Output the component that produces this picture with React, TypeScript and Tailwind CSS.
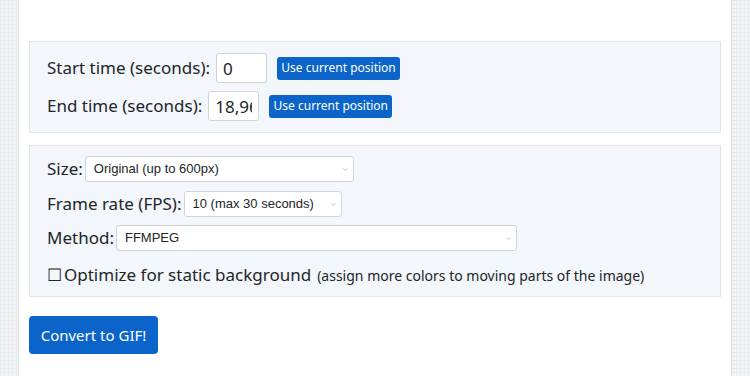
import { ChevronDown } from 'lucide-react'

const font = { fontFamily: '"Noto Sans", "Open Sans", sans-serif' }

export default function App() {
  return (
    <div className="flex min-h-[376px] w-[750px] bg-[#f3f4f5] bg-[linear-gradient(#e9ebed_1px,transparent_1px),linear-gradient(90deg,#e9ebed_1px,transparent_1px)] bg-[size:4px_4px] px-[18px] font-['Noto_Sans','Open_Sans',sans-serif] text-[#212529]">
      <div className="w-[714px] shrink-0 border-x border-[#e0e3e6] bg-white px-[10px] pt-[41px]">
        <section className="border border-[#e1e6eb] bg-[#f3f6fa] px-[17px] py-[11px]">
          <TimeRow label="Start time (seconds):" value="0" gap="ml-[6px]" />
          <div className="h-[8px]" />
          <TimeRow label="End time (seconds):" value="18,967" gap="ml-[6px]" />
        </section>

        <section className="mt-[12px] border border-[#e1e6eb] bg-[#f3f6fa] px-[17px] pb-[8px] pt-[10px]">
          <SelectRow label="Size:" value="Original (up to 600px)" width="w-[269px]" />
          <div className="h-[9px]" />
          <SelectRow label="Frame rate (FPS):" value="10 (max 30 seconds)" width="w-[158px]" />
          <div className="h-[8px]" />
          <SelectRow label="Method:" value="FFMPEG" width="w-[401px]" />
          <div className="mt-[11px] flex items-baseline">
            <span className="text-[17px] leading-[26px]">☐</span>
            <span className="ml-[2px] text-[17px] leading-[26px]">Optimize for static background</span>
            <span className="ml-[6px] text-[14px]">(assign more colors to moving parts of the image)</span>
          </div>
        </section>

        <button className="mt-[19px] h-[38px] w-[129px] rounded-[4px] bg-[#0b64c9] text-[15px] text-white" style={font}>
          Convert to GIF!
        </button>
      </div>
    </div>
  )
}

function TimeRow({ label, value, gap }: { label: string; value: string; gap: string }) {
  return (
    <div className="flex h-[30px] items-center">
      <span className="text-[17px]">{label}</span>
      <input
        readOnly
        value={value}
        className={`${gap} h-[30px] w-[51px] rounded-[3px] border border-[#ced4da] bg-white px-[6px] text-[17px] text-[#212529] outline-none`}
        style={font}
      />
      <button className="ml-[10px] h-[23px] w-[123px] rounded-[3px] bg-[#0b64c9] text-[12px] text-white" style={font}>
        Use current position
      </button>
    </div>
  )
}

function SelectRow({ label, value, width }: { label: string; value: string; width: string }) {
  return (
    <div className="flex h-[26px] items-center">
      <span className="text-[17px]">{label}</span>
      <div className={`ml-[2px] flex h-[26px] items-center justify-between rounded-[3px] border border-[#ced4da] bg-white pl-[8px] pr-[4px] ${width}`}>
        <span className="font-['Liberation_Sans',Arial,sans-serif] text-[13px] text-[#212529]">{value}</span>
        <ChevronDown className="h-[7px] w-[7px] text-[#9aa0a6]" strokeWidth={2} />
      </div>
    </div>
  )
}
